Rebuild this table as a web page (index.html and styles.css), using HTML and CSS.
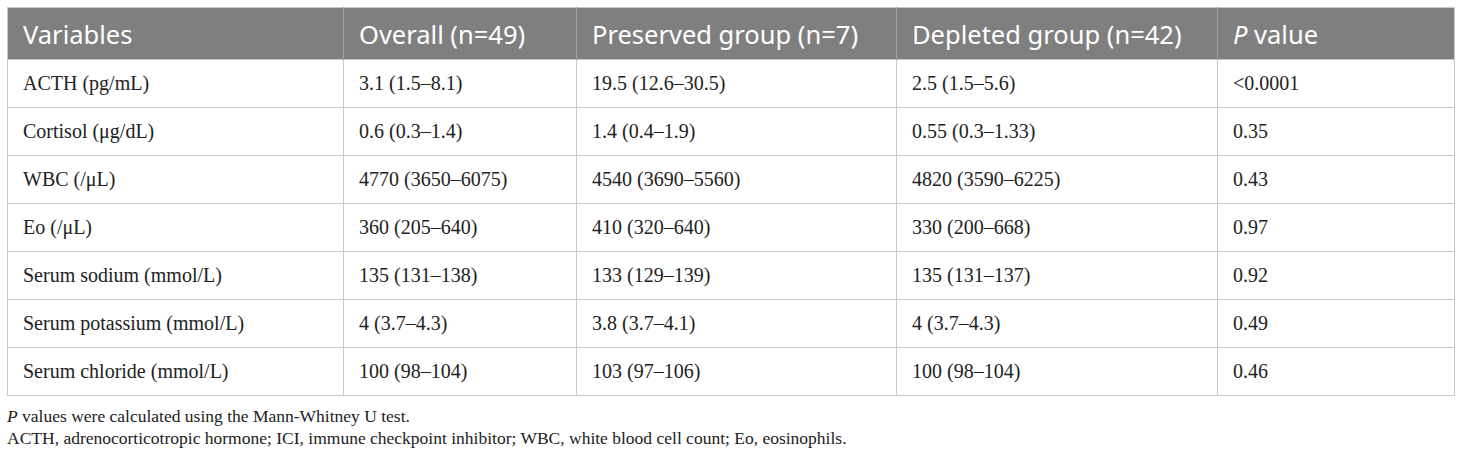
FILE: index.html
```html
<!DOCTYPE html>
<html lang="en">
<head>
<meta charset="utf-8">
<title>Table</title>
<link rel="stylesheet" href="styles.css">
</head>
<body>
<div class="wrap">
  <table class="data">
    <colgroup>
      <col class="c1"><col class="c2"><col class="c3"><col class="c4"><col class="c5">
    </colgroup>
    <thead>
      <tr>
        <th>Variables</th>
        <th>Overall (n=49)</th>
        <th>Preserved group (n=7)</th>
        <th>Depleted group (n=42)</th>
        <th><i>P</i> value</th>
      </tr>
    </thead>
    <tbody>
      <tr><td>ACTH (pg/mL)</td><td>3.1 (1.5–8.1)</td><td>19.5 (12.6–30.5)</td><td>2.5 (1.5–5.6)</td><td>&lt;0.0001</td></tr>
      <tr><td>Cortisol (μg/dL)</td><td>0.6 (0.3–1.4)</td><td>1.4 (0.4–1.9)</td><td>0.55 (0.3–1.33)</td><td>0.35</td></tr>
      <tr><td>WBC (/μL)</td><td>4770 (3650–6075)</td><td>4540 (3690–5560)</td><td>4820 (3590–6225)</td><td>0.43</td></tr>
      <tr><td>Eo (/μL)</td><td>360 (205–640)</td><td>410 (320–640)</td><td>330 (200–668)</td><td>0.97</td></tr>
      <tr><td>Serum sodium (mmol/L)</td><td>135 (131–138)</td><td>133 (129–139)</td><td>135 (131–137)</td><td>0.92</td></tr>
      <tr><td>Serum potassium (mmol/L)</td><td>4 (3.7–4.3)</td><td>3.8 (3.7–4.1)</td><td>4 (3.7–4.3)</td><td>0.49</td></tr>
      <tr><td>Serum chloride (mmol/L)</td><td>100 (98–104)</td><td>103 (97–106)</td><td>100 (98–104)</td><td>0.46</td></tr>
    </tbody>
  </table>
  <div class="notes">
    <p><i>P</i> values were calculated using the Mann-Whitney U test.</p>
    <p>ACTH, adrenocorticotropic hormone; ICI, immune checkpoint inhibitor; WBC, white blood cell count; Eo, eosinophils.</p>
  </div>
</div>
</body>
</html>
```

FILE: styles.css
```css
html, body {
  margin: 0;
  padding: 0;
  background: #ffffff;
}

.wrap {
  padding: 7px 7px 0 7px;
}

.data {
  width: 1447px;
  border-collapse: collapse;
  table-layout: fixed;
  border: 1px solid #c9c9c9;
}

.c1 { width: 336px; }
.c2 { width: 233px; }
.c3 { width: 320px; }
.c4 { width: 321px; }
.c5 { width: 237px; }

.data th {
  height: 52px;
  padding: 0 15px;
  background: #7f7f7f;
  color: #ffffff;
  font-family: "Noto Sans", "Open Sans", sans-serif;
  font-weight: 400;
  font-size: 25.5px;
  text-align: left;
  border-left: 1px solid #a0a0a0;
  box-sizing: border-box;
}

.data th:first-child {
  border-left: none;
}

.data td {
  height: 48px;
  padding: 0 15px;
  font-family: "Liberation Serif", "Times New Roman", serif;
  font-size: 20px;
  color: #222222;
  border: 1px solid #c9c9c9;
  box-sizing: border-box;
}

.notes {
  margin-top: 9px;
  font-family: "Liberation Serif", "Times New Roman", serif;
  font-size: 17.5px;
  line-height: 22px;
  color: #222222;
}

.notes p {
  margin: 0;
}
```
